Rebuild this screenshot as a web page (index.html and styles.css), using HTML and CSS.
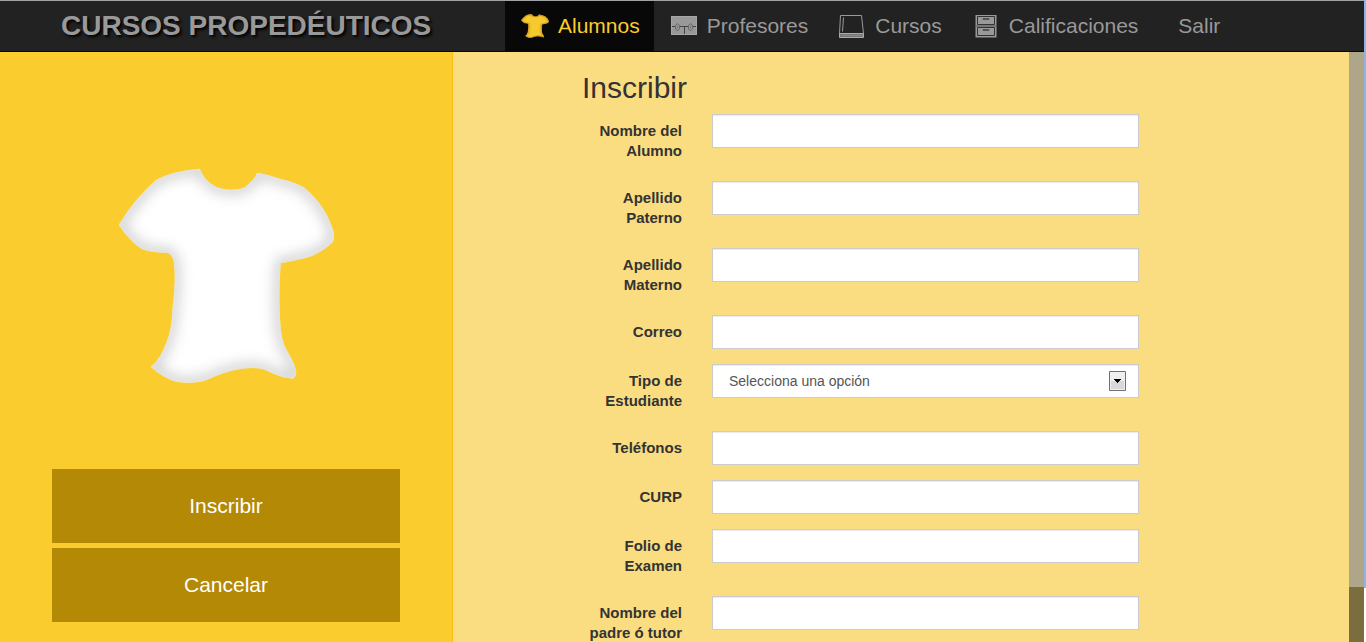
FILE: index.html
```html
<!DOCTYPE html>
<html lang="es">
<head>
<meta charset="utf-8">
<title>Cursos Propedéuticos</title>
<link rel="stylesheet" href="styles.css">
</head>
<body>
<div class="page">
  <header class="topbar">
    <div class="brand">CURSOS PROPEDÉUTICOS</div>
    <nav class="menu">
      <a class="menu-item active" href="#alumnos">
        <svg class="menu-icon" viewBox="54 54 651 648" preserveAspectRatio="none" aria-hidden="true"><use href="#shirt-shape" fill="#f8c92f"/><g clip-path="url(#shirt-clip)" opacity="0.65"><use href="#shirt-shape" fill="none" stroke="#a37a0c" stroke-width="50" filter="url(#soft)"/></g></svg>
        <span>Alumnos</span>
      </a>
      <a class="menu-item" href="#profesores">
        <svg class="menu-icon" viewBox="0 0 28 24" aria-hidden="true"><path d="M1 2h26v19H1z" fill="#999"/><path d="M1 12.500h26M14.500 12.500V21" stroke="#444" fill="none"/><path d="M1.500 2.500h25v18h-25z" stroke="#a6a6a6" fill="none"/><path d="M5.500 15v-3.500q2-3.500 4 0v3l-1.500 2h-1zM18.500 15v-3.500q2-3.500 4 0v3l-1.500 2h-1z" fill="#999" stroke="#666"/><path d="M7.500 11.500v3M20.500 11.500v3" stroke="#777"/></svg>
        <span>Profesores</span>
      </a>
      <a class="menu-item" href="#cursos">
        <svg class="menu-icon" viewBox="0 0 28 24" aria-hidden="true"><path d="M2.500 1.500h21l2 18h-24z" fill="none" stroke="#999"/><path d="M5.500 3.500l-1 14" stroke="#999" fill="none"/><path d="M1.500 19.500h24v4h-24z" fill="#777" stroke="#aaa"/><path d="M4 21.500h21" stroke="#888"/></svg>
        <span>Cursos</span>
      </a>
      <a class="menu-item" href="#calificaciones">
        <svg class="menu-icon" viewBox="0 0 28 24" aria-hidden="true"><path d="M3.500 1h21v22.500h-21z" fill="#999"/><path d="M5.500 2.500h17v8h-17zM5.500 13.500h17v8h-17z" fill="#999" stroke="#333"/><path d="M4 12h20" stroke="#555"/><path d="M11 4.500h6v1h-6zM11 15.500h6v1h-6z" fill="#888" stroke="#555"/></svg>
        <span>Calificaciones</span>
      </a>
      <a class="menu-item text-only" href="#salir">Salir</a>
    </nav>
  </header>

  <div class="workspace">
    <aside class="sidebar">
      <svg class="shirt" viewBox="54 54 651 648" role="img" aria-label="Alumnos">
        <defs>
          <path id="shirt-shape" d="M56 225Q100 150 165 92Q210 64 299 56Q325 118 392 119Q430 117 436 110Q465 88 471 69Q500 72 545 88Q590 98 615 115Q680 170 702 250Q703 270 698 277Q670 305 630 320Q600 328 542 340Q535 440 541 520Q543 570 560 600Q585 640 589 668Q585 690 570 685Q545 683 500 662Q475 650 425 656Q370 665 320 690Q290 702 232 696Q190 685 152 650Q180 630 200 575Q215 540 218 470Q228 390 222 340Q218 315 205 309Q150 308 125 297Q90 275 56 225Z"/>
          <clipPath id="shirt-clip"><use href="#shirt-shape"/></clipPath>
          <filter id="soft" x="-10%" y="-10%" width="120%" height="120%"><feGaussianBlur stdDeviation="20"/></filter>
        </defs>
        <use href="#shirt-shape" fill="#fff"/>
        <g clip-path="url(#shirt-clip)"><use href="#shirt-shape" fill="none" stroke="#c4c4c4" stroke-width="26" filter="url(#soft)"/></g>
      </svg>
      <div class="actions">
        <button class="action" type="submit" form="enroll">Inscribir</button>
        <button class="action" type="button">Cancelar</button>
      </div>
    </aside>

    <main class="content">
      <form class="form" id="enroll">
        <h1 class="form-title">Inscribir</h1>
        <div class="row"><label class="label" for="nombre">Nombre del Alumno</label><input class="field" id="nombre" type="text"></div>
        <div class="row"><label class="label" for="paterno">Apellido Paterno</label><input class="field" id="paterno" type="text"></div>
        <div class="row"><label class="label" for="materno">Apellido Materno</label><input class="field" id="materno" type="text"></div>
        <div class="row"><label class="label" for="correo">Correo</label><input class="field" id="correo" type="email"></div>
        <div class="row">
          <label class="label" for="tipo">Tipo de Estudiante</label>
          <div class="select-wrap">
            <select class="field select" id="tipo"><option>Selecciona una opción</option></select>
            <svg class="select-arrow" viewBox="0 0 17 20" aria-hidden="true"><path d="M.5.500h16v19H.5z" fill="#efefef" stroke="#707070"/><path d="M2 10h13v8H2z" fill="#d8d8d8"/><path d="M5 8h7v1h-1v1h-1v1H9v1H8v-1H7v-1H6V9H5z" fill="#000"/></svg>
          </div>
        </div>
        <div class="row"><label class="label" for="telefonos">Teléfonos</label><input class="field" id="telefonos" type="tel"></div>
        <div class="row"><label class="label" for="curp">CURP</label><input class="field" id="curp" type="text"></div>
        <div class="row"><label class="label" for="folio">Folio de Examen</label><input class="field" id="folio" type="text"></div>
        <div class="row"><label class="label" for="tutor">Nombre del padre ó tutor</label><input class="field" id="tutor" type="text"></div>
      </form>
    </main>
    <div class="track" aria-hidden="true"><div class="thumb"></div></div>
  </div>
</div>
<div class="edge" aria-hidden="true"></div>
</body>
</html>
```

FILE: styles.css
```css
* { box-sizing: border-box; }

body {
  display: flex;
  height: 100vh;
  margin: 0;
  overflow: hidden;
  background: #fff;
  color: #333;
  font-family: "Liberation Sans", Arial, sans-serif;
  font-size: 14px;
  line-height: 20px;
}

.page {
  display: flex;
  flex: 1;
  flex-direction: column;
  min-width: 0;
}

/* Window edge beside the page */
.edge {
  width: 2px;
  background: linear-gradient(#8ab6e1 588px, #fff 588px);
}

.topbar {
  display: grid;
  grid-template-columns: 505fr 859fr;
  flex: none;
  height: 52px;
  border-top: 1px solid #a0a3a3;
  border-bottom: 1px solid #080808;
  background: #222;
}

.brand {
  align-self: center;
  padding-left: 61px;
  color: #999;
  font-size: 28px;
  font-weight: bold;
  line-height: 32px;
  white-space: nowrap;
  text-shadow: 2px 2px 3px #000;
}

.menu { display: flex; }

.menu-item {
  display: flex;
  align-items: center;
  gap: 9px;
  padding: 0 14px 0 16px;
  color: #999;
  font-size: 21px;
  line-height: 24px;
  text-decoration: none;
}

.menu-item.active {
  background: #080808;
  color: #fbcc2e;
}

.menu-item.text-only { padding: 0 26px; }

.menu-icon {
  flex: none;
  width: 28px;
  height: 24px;
}

.workspace {
  display: grid;
  grid-template-columns: 453fr 896fr 15px;
  flex: 1;
  min-height: 0;
}

.sidebar {
  display: flex;
  flex-direction: column;
  align-items: center;
  justify-content: space-between;
  padding: 116px 52px 20px;
  border-right: 1px solid #fbc110;
  background: #fbcc2e;
}

.shirt {
  width: 217px;
  height: 216px;
}

.actions {
  display: flex;
  flex-direction: column;
  gap: 5px;
  width: 100%;
}

.action {
  width: 100%;
  padding: 25px 16px;
  border: 0;
  background: #b38905;
  color: #fff;
  font-family: inherit;
  font-size: 21px;
  line-height: 24px;
}

.content {
  display: grid;
  grid-template-columns: 129fr 557fr 210fr;
  min-height: 0;
  overflow: auto;
  scrollbar-width: none;
  background: #fbdd81;
}

.form {
  grid-column: 2;
  padding-top: 19px;
}

.form-title {
  margin: 0 0 10px;
  font-size: 30px;
  font-weight: normal;
  line-height: 33px;
}

.row {
  display: grid;
  grid-template-columns: 100fr 427fr;
  column-gap: 30px;
  align-items: start;
  margin-bottom: 15px;
}

.label {
  padding: 7px 0 5px;
  font-size: 15px;
  font-weight: bold;
  text-align: right;
}

.field {
  display: block;
  width: 100%;
  height: 34px;
  padding: 6px 12px;
  border: 1px solid #ccc;
  border-radius: 0;
  background: #fff;
  box-shadow: inset 0 1px 1px rgba(0, 0, 0, 0.08);
  color: #555;
  font-family: inherit;
  font-size: 14px;
  line-height: 20px;
}

.select-wrap { position: relative; }

.select {
  appearance: none;
  padding-left: 16px;
}

.select-arrow {
  position: absolute;
  top: 7px;
  right: 13px;
  width: 17px;
  height: 20px;
  pointer-events: none;
}

.track { background: #7a6e3e; }

.thumb {
  height: 535px;
  background: #afa588;
}
```
